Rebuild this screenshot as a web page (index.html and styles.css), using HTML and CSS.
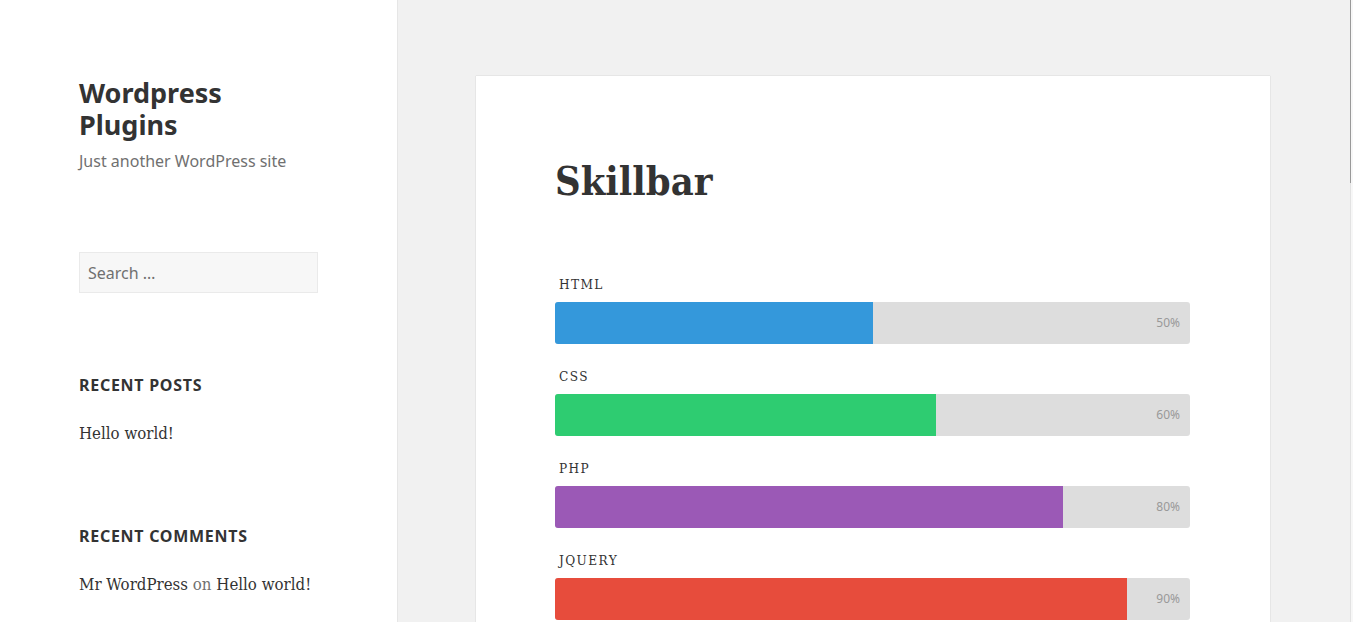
FILE: index.html
```html
<!DOCTYPE html>
<html lang="en">
<head>
<meta charset="utf-8">
<title>Skillbar – Wordpress Plugins</title>
<link rel="stylesheet" href="styles.css">
</head>
<body>
<div class="page">
  <aside class="sidebar">
    <header class="site-header">
      <h1 class="site-title"><span class="title-line">Wordpress</span><span class="title-line">Plugins</span></h1>
      <p class="site-description">Just another WordPress site</p>
    </header>
    <section class="widget widget-search">
      <input class="search-field" type="search" placeholder="Search …">
    </section>
    <section class="widget widget-posts">
      <h2 class="widget-title">Recent Posts</h2>
      <p class="widget-line"><a href="#">Hello world!</a></p>
    </section>
    <section class="widget widget-comments">
      <h2 class="widget-title">Recent Comments</h2>
      <p class="widget-line"><a href="#">Mr WordPress</a> <span class="muted">on</span> <a href="#">Hello world!</a></p>
    </section>
  </aside>
  <main class="main">
    <article class="card">
      <h1 class="entry-title">Skillbar</h1>
      <div class="skills">
        <div class="skill">
          <div class="skill-title">HTML</div>
          <div class="bar"><div class="fill fill-blue" style="width:50%"></div><span class="pct">50%</span></div>
        </div>
        <div class="skill">
          <div class="skill-title">CSS</div>
          <div class="bar"><div class="fill fill-green" style="width:60%"></div><span class="pct">60%</span></div>
        </div>
        <div class="skill">
          <div class="skill-title">PHP</div>
          <div class="bar"><div class="fill fill-purple" style="width:80%"></div><span class="pct">80%</span></div>
        </div>
        <div class="skill">
          <div class="skill-title">JQUERY</div>
          <div class="bar"><div class="fill fill-red" style="width:90%"></div><span class="pct">90%</span></div>
        </div>
      </div>
    </article>
  </main>
</div>
<div class="scrollbar"><div class="scroll-thumb"></div></div>
</body>
</html>
```

FILE: styles.css
```css
html, body {
  margin: 0;
  padding: 0;
  height: 100%;
  overflow: hidden;
}
body {
  background: #f1f1f1;
  color: #333;
  font-family: "Noto Sans", "Open Sans", sans-serif;
}
.page {
  display: flex;
  min-height: 100vh;
  width: 1350px;
}
.sidebar {
  flex: none;
  width: 397px;
  box-sizing: border-box;
  background: #fff;
  box-shadow: 0 0 1px rgba(0,0,0,0.25);
  padding: 77px 0 0 79px;
  display: flex;
  flex-direction: column;
}
.site-title {
  margin: 0;
  font-size: 27px;
  font-weight: 700;
  color: #333;
  display: flex;
  flex-direction: column;
}
.title-line {
  display: block;
  height: 32px;
  line-height: 32px;
}
.site-description {
  margin: 8px 0 0;
  font-size: 16px;
  line-height: 24px;
  color: #707070;
}
.widget {
  margin-top: 79px;
}
.widget.widget-search {
  margin-top: 79px;
}
.widget.widget-posts {
  margin-top: 80px;
}
.widget.widget-comments {
  margin-top: 79px;
}
.search-field {
  display: block;
  box-sizing: border-box;
  width: 239px;
  height: 41px;
  margin: 0;
  padding: 0 8px;
  border: 1px solid #eaeaea;
  border-radius: 0;
  background: #f7f7f7;
  font-family: "Noto Sans", sans-serif;
  font-size: 16px;
  color: #333;
  outline: none;
}
.search-field::placeholder {
  color: #707070;
  opacity: 1;
}
.widget-title {
  margin: 0;
  font-size: 16px;
  line-height: 24px;
  font-weight: 700;
  text-transform: uppercase;
  letter-spacing: 0.045em;
  color: #333;
}
.widget-line {
  margin: 24px 0 0;
  font-family: "DejaVu Serif", "Liberation Serif", serif;
  font-stretch: condensed;
  font-size: 16.7px;
  line-height: 24px;
  color: #333;
}
.widget-line a {
  color: #333;
  text-decoration: none;
}
.muted {
  color: #707070;
}
.main {
  flex: 1;
  padding: 76px 0 0 79px;
}
.card {
  width: 794px;
  min-height: 700px;
  box-sizing: border-box;
  background: #fff;
  box-shadow: 0 0 1px rgba(0,0,0,0.25);
  padding: 81px 80px 0 79px;
}
.entry-title {
  margin: 0;
  font-family: "DejaVu Serif", "Liberation Serif", serif;
  font-stretch: condensed;
  font-weight: 700;
  font-size: 39.5px;
  line-height: 48px;
  color: #333;
}
.skills {
  margin-top: 69px;
}
.skill-title {
  font-family: "DejaVu Serif", "Liberation Serif", serif;
  font-stretch: condensed;
  font-size: 13.5px;
  line-height: 20px;
  letter-spacing: 1.4px;
  color: #333;
  padding-left: 4px;
  margin-bottom: 8px;
}
.bar {
  position: relative;
  height: 42px;
  background: #dddddd;
  border-radius: 3px;
  overflow: hidden;
  margin-bottom: 22px;
  display: flex;
  align-items: center;
}
.fill {
  height: 100%;
}
.fill-blue { background: #3498db; }
.fill-green { background: #2ecc71; }
.fill-purple { background: #9b59b6; }
.fill-red { background: #e74c3c; }
.pct {
  position: absolute;
  right: 10px;
  top: 0;
  line-height: 42px;
  font-family: "Noto Sans", sans-serif;
  font-size: 12px;
  color: #999;
}
.scrollbar {
  position: fixed;
  top: 0;
  right: 0;
  width: 3px;
  height: 100%;
  background: #f7f7f7;
  border-left: 1px solid #e2e2e2;
  box-sizing: border-box;
}
.scroll-thumb {
  margin-left: -1px;
  width: 2px;
  height: 183px;
  border-left: 1px solid #999;
  box-sizing: border-box;
}
```
